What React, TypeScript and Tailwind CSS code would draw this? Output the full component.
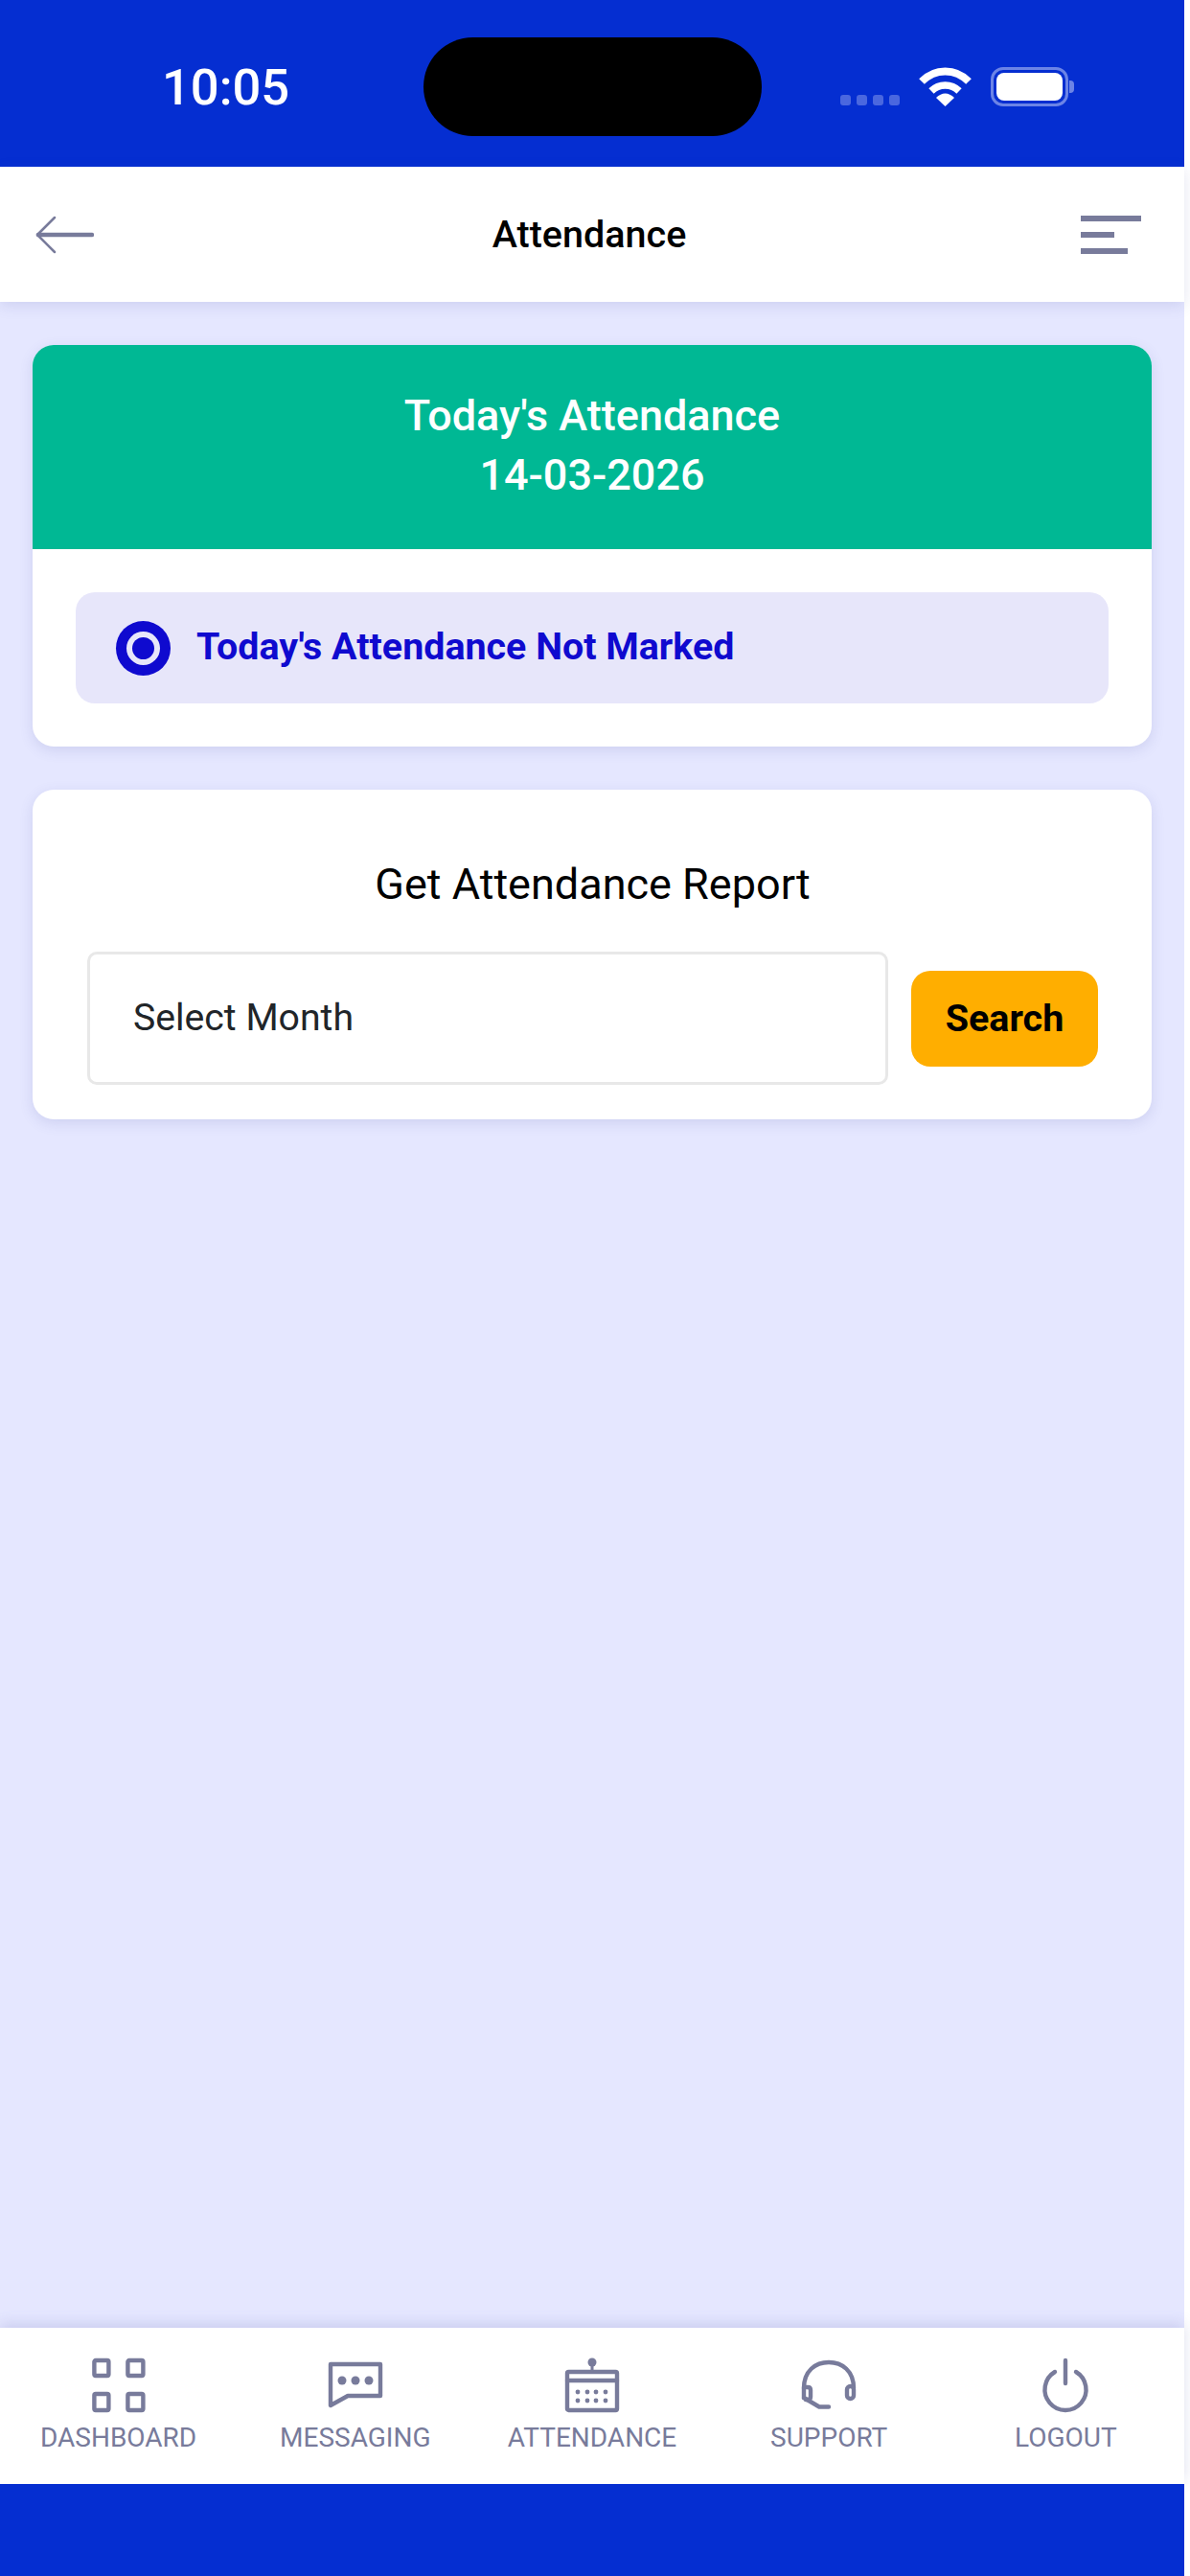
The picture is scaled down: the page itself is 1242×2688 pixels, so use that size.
const C = "#787b9b";

function NavItem({ label, children }: { label: string; children: React.ReactNode }) {
  return (
    <div className="flex flex-1 flex-col items-center">
      <svg width="64" height="60" viewBox="0 0 64 60" fill="none" stroke={C} strokeWidth="4.4" strokeLinecap="round" strokeLinejoin="round">
        {children}
      </svg>
      <span className="mt-[9px] text-[28px] leading-[32px] text-[#787b9b]">{label}</span>
    </div>
  );
}

export default function App() {
  return (
    <div className="flex h-[2688px] w-[1236px] flex-col bg-[#e5e7ff] font-['Roboto',sans-serif]">
      <div className="flex h-[174px] shrink-0 items-start bg-[#052ed1]">
        <span className="ml-[169px] mt-[61px] w-[273px] text-[52.5px] font-medium leading-[60px] text-white">10:05</span>
        <div className="mt-[39px] h-[103px] w-[353px] rounded-[52px] bg-black" />
        <div className="ml-[82px] mt-[99px] flex gap-[6px]">
          <div className="h-[11px] w-[11px] rounded-[3px] bg-[#4a67df]" />
          <div className="h-[11px] w-[11px] rounded-[3px] bg-[#4a67df]" />
          <div className="h-[11px] w-[11px] rounded-[3px] bg-[#4a67df]" />
          <div className="h-[11px] w-[11px] rounded-[3px] bg-[#4a67df]" />
        </div>
        <svg className="ml-[20px] mt-[70px]" width="55" height="41" viewBox="0 0 55 41" fill="none">
          <path d="M3 15 C17 1 38 1 52 15" stroke="#fff" strokeWidth="8" />
          <path d="M13 25 C21 17 34 17 42 25" stroke="#fff" strokeWidth="7.5" />
          <path d="M18 32 C24 26 31 26 37 32 L27.5 41 Z" fill="#fff" />
        </svg>
        <div className="ml-[20px] mt-[70px] flex items-center">
          <div className="h-[41px] w-[81px] rounded-[13px] border-[3px] border-[#6c84e6] p-[3px]">
            <div className="h-full w-full rounded-[8px] bg-white" />
          </div>
          <div className="ml-[1px] h-[13px] w-[5px] rounded-r-[4px] bg-[#6c84e6]" />
        </div>
      </div>

      <header className="relative flex h-[141px] shrink-0 items-center justify-between bg-white pl-[36px] pr-[45px] shadow-[0_4px_14px_rgba(90,95,170,0.16)]">
        <svg width="62" height="40" viewBox="0 0 62 40" fill="none" stroke={C} strokeLinecap="round" strokeLinejoin="round">
          <path d="M60 20 H4" strokeWidth="4.5" />
          <path d="M21 2 L3 20 L21 38" strokeWidth="2.5" />
        </svg>
        <h1 className="pl-[4px] text-[39.5px] font-medium leading-[46px] text-black">Attendance</h1>
        <div className="flex w-[63px] flex-col gap-[11px]">
          <div className="h-[6px] w-[63px] bg-[#787b9b]" />
          <div className="h-[6px] w-[35px] bg-[#787b9b]" />
          <div className="h-[6px] w-[49px] bg-[#787b9b]" />
        </div>
      </header>

      <main className="flex min-h-0 flex-1 flex-col gap-[45px] px-[34px] pt-[45px]">
        <section className="overflow-hidden rounded-[22px] bg-white shadow-[0_4px_14px_rgba(90,95,170,0.16)]">
          <div className="flex h-[213px] flex-col items-center justify-center bg-[#00b894] pb-[3px] text-[45px] font-medium leading-[62px] text-white">
            <p>Today's Attendance</p>
            <p>14-03-2026</p>
          </div>
          <div className="p-[45px]">
            <div className="flex h-[116px] items-center gap-[27px] rounded-[20px] bg-[#e7e6fa] pl-[42px]">
              <div className="flex h-[57px] w-[57px] items-center justify-center rounded-full bg-[#0f0acf]">
                <div className="flex h-[35px] w-[35px] items-center justify-center rounded-full bg-[#e7e6fa]">
                  <div className="h-[23px] w-[23px] rounded-full bg-[#0f0acf]" />
                </div>
              </div>
              <span className="pb-[2px] text-[39.4px] font-bold leading-[46px] text-[#0f0acf]">Today's Attendance Not Marked</span>
            </div>
          </div>
        </section>

        <section className="h-[344px] rounded-[22px] bg-white pl-[57px] pr-[56px] pt-[70px] shadow-[0_4px_14px_rgba(90,95,170,0.16)]">
          <h2 className="text-center text-[45px] leading-[58px] text-black">Get Attendance Report</h2>
          <div className="mt-[41px] flex items-center gap-[24px]">
            <div className="flex h-[139px] w-[836px] items-center rounded-[10px] border-[3px] border-[#e8e8e8] pl-[45px] text-[39.2px] text-[#212529]">Select Month</div>
            <button className="h-[100px] w-[195px] rounded-[20px] bg-[#ffae00] text-[39.5px] font-bold text-black">Search</button>
          </div>
        </section>
      </main>

      <nav className="flex h-[163px] shrink-0 bg-white pt-[30px] shadow-[0_-4px_14px_rgba(90,95,170,0.2)]">
        <NavItem label="DASHBOARD">
          <rect x="6.4" y="4" width="15" height="16" rx="1.5" />
          <rect x="41.4" y="4" width="16" height="16" rx="1.5" />
          <rect x="6.4" y="39" width="15" height="17" rx="1.5" />
          <rect x="41.4" y="39" width="16" height="17" rx="1.5" />
        </NavItem>
        <NavItem label="MESSAGING">
          <path d="M6 8 H58 V41 H24 L6 51 Z" />
          <circle cx="18" cy="25" r="4.5" fill={C} stroke="none" />
          <circle cx="32" cy="25" r="4.5" fill={C} stroke="none" />
          <circle cx="46" cy="25" r="4.5" fill={C} stroke="none" />
        </NavItem>
        <NavItem label="ATTENDANCE">
          <rect x="6" y="16" width="52" height="40" rx="1.5" />
          <path d="M6 25 H58" />
          <circle cx="32" cy="6" r="4.5" fill={C} stroke="none" />
          <path d="M32 7 V15" strokeWidth="3" />
          <g fill={C} stroke="none">
            <circle cx="17" cy="37" r="2.4" /><circle cx="27" cy="37" r="2.4" /><circle cx="36" cy="37" r="2.4" /><circle cx="46" cy="37" r="2.4" />
            <circle cx="17" cy="46" r="2.4" /><circle cx="27" cy="46" r="2.4" /><circle cx="36" cy="46" r="2.4" /><circle cx="46" cy="46" r="2.4" />
          </g>
        </NavItem>
        <NavItem label="SUPPORT">
          <path d="M6 33 C6 15 18 6 32 6 C46 6 58 15 58 33" />
          <rect x="51" y="31" width="7" height="13" rx="3.5" />
          <path d="M6 33 V43" />
          <path d="M6 32 H10 C12 32 13 33 13 35 V42 C13 44 12 45 10 45 H8" />
          <path d="M6 43 L22 52.5 H32" />
        </NavItem>
        <NavItem label="LOGOUT">
          <path d="M32 4 V28" />
          <path d="M21 16 A21.5 21.5 0 1 0 43 16" />
        </NavItem>
      </nav>
      <div className="h-[96px] shrink-0 bg-[#052ed1]" />
    </div>
  );
}
